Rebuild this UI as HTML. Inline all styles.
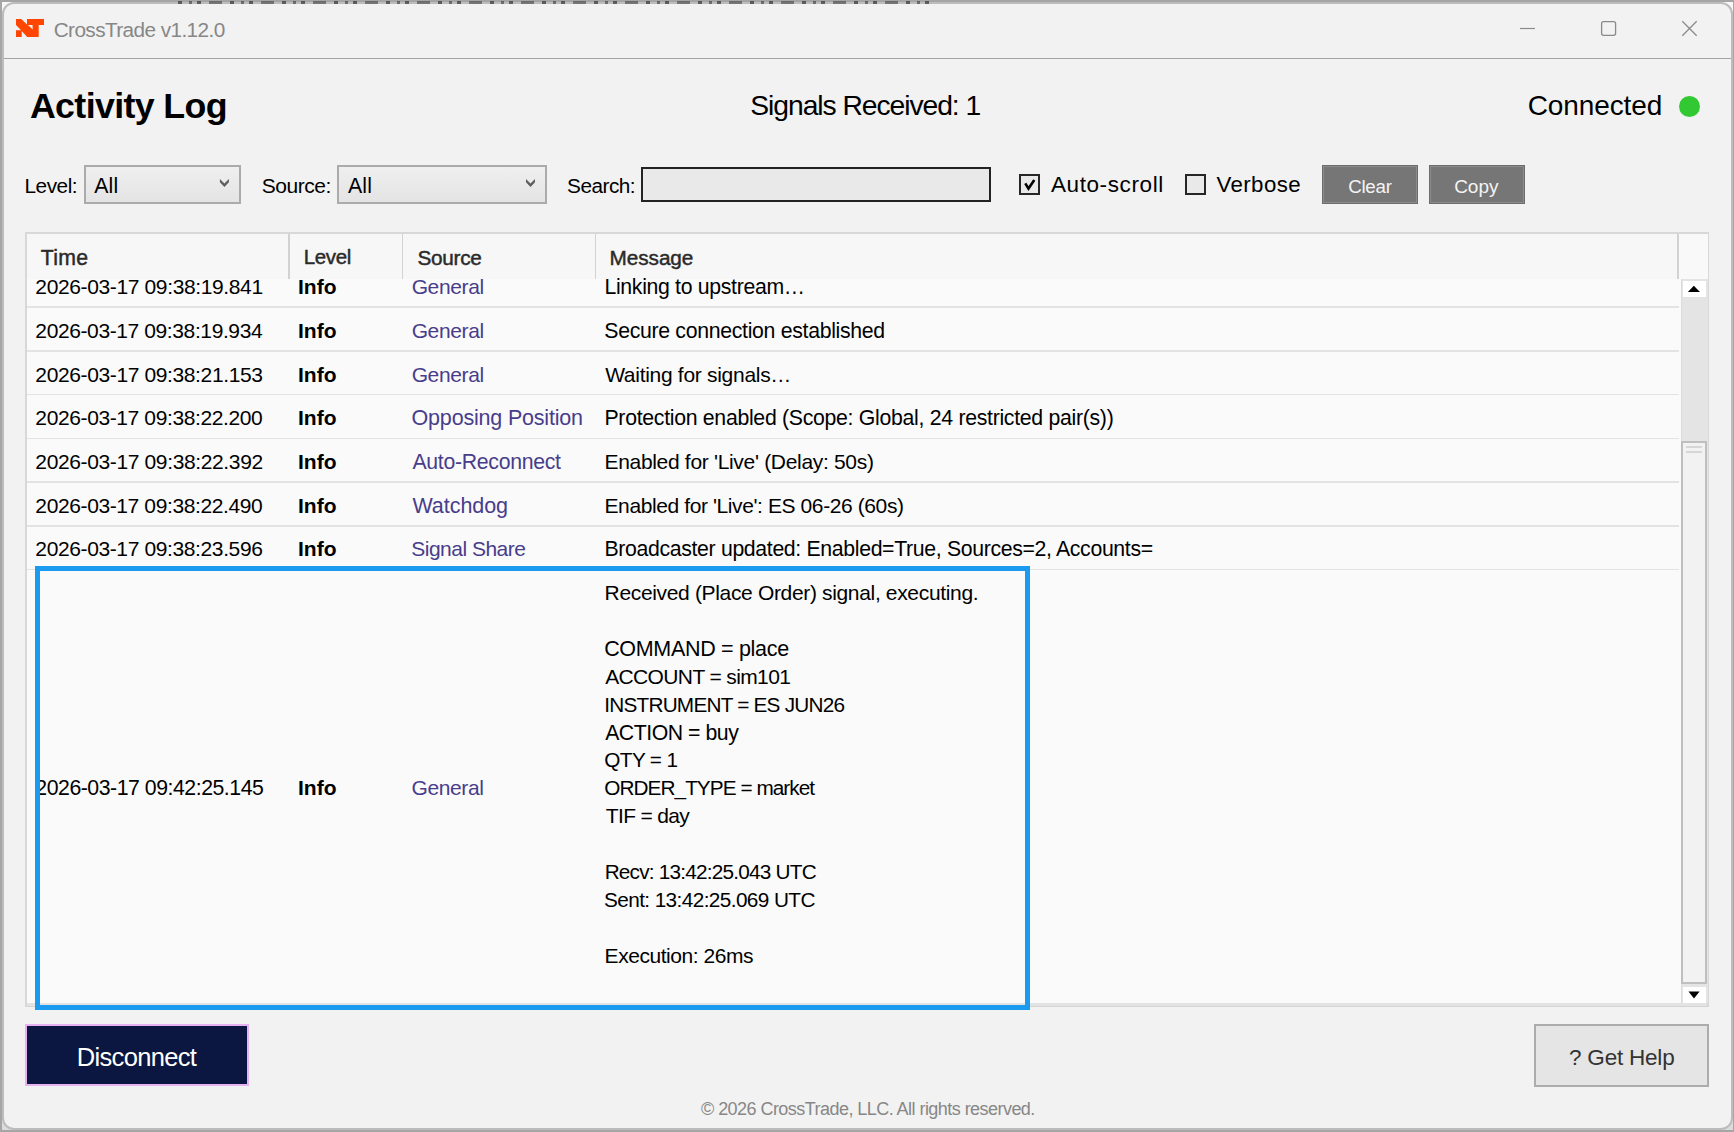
<!DOCTYPE html>
<html><head><meta charset="utf-8">
<style>
*{box-sizing:border-box}
html,body{margin:0;padding:0}
body{width:1734px;height:1132px;position:relative;overflow:hidden;background:#a6a6a6;font-family:"Liberation Sans",sans-serif}
.t{position:absolute;white-space:pre;line-height:1}
.a{position:absolute}
.combo{position:absolute;border:2px solid #ababab;background:linear-gradient(#efefef,#e4e4e4)}
.cb{position:absolute;width:21px;height:21px;border:2px solid #262626;background:#e8e9e8}
.gbtn{position:absolute;width:96px;height:39px;background:#767676;border:1px solid #6c6c6c;box-shadow:inset 0 0 0 1px #8c8c8c}
.vd{position:absolute;top:234px;width:1.5px;height:44.5px;background:#d2d2d2}
.rs{position:absolute;left:27px;width:1652px;height:1.5px;background:#e3e3e3}
</style></head><body>
<div class="a" style="left:0;top:0;width:1734px;height:2px;background:#a5a5a5"></div>

<div class="a" style="left:2px;top:2px;width:12px;height:12px;background:#f7f7f7"></div>
<div class="a" style="left:1721px;top:2px;width:12px;height:12px;background:#f7f7f7"></div>
<div class="a" style="left:2px;top:1118px;width:12px;height:12px;background:#dcdcdc"></div>
<div class="a" style="left:1721px;top:1118px;width:12px;height:12px;background:#dcdcdc"></div>
<div class="a" style="left:2px;top:2px;width:1731px;height:1128px;border:2px solid #bcbcbc;border-radius:12px;background:#f2f2f2"></div>
<div class="a" style="left:178px;top:1px;width:755px;height:3px;background:repeating-linear-gradient(90deg,rgba(30,30,30,.6) 0 4px,transparent 4px 11px,rgba(30,30,30,.5) 11px 14px,transparent 14px 19px,rgba(30,30,30,.6) 19px 23px,transparent 23px 31px,rgba(30,30,30,.45) 31px 44px,transparent 44px 52px)"></div>
<div class="a" style="left:4px;top:57.8px;width:1727px;height:1.4px;background:#a4a4a4"></div>
<svg class="a" style="left:16px;top:19px" width="28" height="18" viewBox="0 0 28 18">
<path fill="#ff4500" fill-rule="evenodd" d="M0,0H5.3L11,5.6V0H28V5.9H22.7V17.9H11.2L5.7,11.9V17.9H0V11.3H5.1L0,5.9Z M12,6H16.6V10.6Z"/>
</svg>
<svg class="a" style="left:1500px;top:10px" width="220" height="40" viewBox="1500 10 220 40">
<path d="M1520,28.5H1535" stroke="#8a8a8a" stroke-width="1.2" fill="none"/>
<rect x="1601.6" y="21.7" width="14" height="13.6" rx="2" ry="2" stroke="#8a8a8a" stroke-width="1.3" fill="none"/>
<path d="M1682.3,21.3L1696.7,35.7M1696.7,21.3L1682.3,35.7" stroke="#8a8a8a" stroke-width="1.3" fill="none"/>
</svg>
<div class="a" style="left:1679.2px;top:95.7px;width:21px;height:21px;border-radius:50%;background:#32c832"></div>
<!-- combos -->
<div class="combo" style="left:84px;top:165px;width:157px;height:39px"></div>
<div class="combo" style="left:337px;top:165px;width:210px;height:39px"></div>
<svg class="a" style="left:0;top:0" width="600" height="220" viewBox="0 0 600 220">
<path d="M219.9,179L224.4,183.6L228.9,179V182.2L224.4,187L219.9,182.2Z" fill="#5e5e5e"/>
<path d="M526,179L530.5,183.6L535,179V182.2L530.5,187L526,182.2Z" fill="#5e5e5e"/>
</svg>
<div class="a" style="left:641px;top:167px;width:350px;height:35px;border:2px solid #232323;background:#e8e9e8"></div>
<div class="cb" style="left:1019px;top:174px"></div>
<div class="cb" style="left:1185px;top:174px"></div>
<svg class="a" style="left:1019px;top:174px" width="21" height="21" viewBox="0 0 21 21">
<path d="M6.3,9.3L9.5,14.6L15.3,6.1" stroke="#000" stroke-width="2.6" fill="none" stroke-linejoin="miter"/>
</svg>
<div class="gbtn" style="left:1322px;top:165px"></div>
<div class="gbtn" style="left:1429px;top:165px"></div>
<!-- table -->
<div class="a" style="left:25px;top:232px;width:1684px;height:775px;border:2px solid #d8d8d8;border-bottom-width:1px;border-bottom-color:#d4d4d4;background:#fafafa"></div>
<div class="a" style="left:26.6px;top:233.6px;width:1681px;height:45px;background:#f7f7f7"></div>
<div class="vd" style="left:288.2px"></div>
<div class="vd" style="left:401.9px"></div>
<div class="vd" style="left:594.8px"></div>
<div class="vd" style="left:1677.4px"></div>
<div class="a" style="left:1679px;top:233.6px;width:29px;height:45px;background:#f9f9f9"></div>
<div class="rs" style="top:306.4px"></div>
<div class="rs" style="top:350.1px"></div>
<div class="rs" style="top:393.9px"></div>
<div class="rs" style="top:437.6px"></div>
<div class="rs" style="top:481.4px"></div>
<div class="rs" style="top:525.1px"></div>
<div class="rs" style="top:568.6px"></div>
<div class="a" style="left:27px;top:1003px;width:1680px;height:3px;background:#e3e3e3"></div>
<!-- scrollbar -->
<div class="a" style="left:1681px;top:279px;width:26.8px;height:724px;background:#e4e4e4;border-left:1px solid #dcdcdc"></div>
<div class="a" style="left:1683px;top:281px;width:23px;height:16px;background:#fff"></div>
<div class="a" style="left:1683px;top:986.5px;width:23px;height:16.5px;background:#fff"></div>
<svg class="a" style="left:1680px;top:278px" width="30" height="730" viewBox="1680 278 30 730">
<path d="M1687.9,292L1693.8,285.8L1700,292Z" fill="#000"/>
<path d="M1688.5,991.5L1699.6,991.5L1694,998.4Z" fill="#000"/>
</svg>
<div class="a" style="left:1681px;top:441px;width:26px;height:543px;border:2px solid #bfbfbf;background:#f2f2f2"></div>
<div class="a" style="left:1686px;top:446px;width:16px;height:1.8px;background:#d6d6d6"></div>
<div class="a" style="left:1686px;top:451px;width:16px;height:1.8px;background:#d6d6d6"></div>
<!-- selection -->
<!-- bottom -->
<div class="a" style="left:25px;top:1024px;width:224px;height:62px;border:2px solid #e6b3f0;background:#0b1740"></div>
<div class="a" style="left:1534px;top:1024px;width:175px;height:63px;border:2px solid #acacac;background:#e5e5e5"></div>
<div id="title" class="t" style="left:53.69px;top:20.04px;font-size:20.75px;letter-spacing:-0.583px;font-weight:normal;color:#878787">CrossTrade v1.12.0</div>
<div id="h1" class="t" style="left:29.95px;top:88.54px;font-size:35.75px;letter-spacing:-0.633px;font-weight:bold;color:#000">Activity Log</div>
<div id="sig" class="t" style="left:750.30px;top:91.09px;font-size:28.25px;letter-spacing:-1.045px;font-weight:normal;color:#000">Signals Received: 1</div>
<div id="conn" class="t" style="left:1527.66px;top:92.10px;font-size:28.0px;letter-spacing:-0.095px;font-weight:normal;color:#000">Connected</div>
<div id="lvl" class="t" style="left:24.53px;top:176.24px;font-size:20.75px;letter-spacing:-0.454px;font-weight:normal;color:#000">Level:</div>
<div id="all1" class="t" style="left:94.14px;top:175.81px;font-size:21.25px;letter-spacing:0.277px;font-weight:normal;color:#000">All</div>
<div id="src" class="t" style="left:261.72px;top:175.12px;font-size:21.0px;letter-spacing:-0.460px;font-weight:normal;color:#000">Source:</div>
<div id="all2" class="t" style="left:348.05px;top:175.91px;font-size:21.25px;letter-spacing:0.122px;font-weight:normal;color:#000">All</div>
<div id="srch" class="t" style="left:567.10px;top:176.44px;font-size:20.75px;letter-spacing:-0.506px;font-weight:normal;color:#000">Search:</div>
<div id="auto" class="t" style="left:1050.88px;top:173.85px;font-size:22.5px;letter-spacing:0.616px;font-weight:normal;color:#000">Auto-scroll</div>
<div id="verb" class="t" style="left:1216.39px;top:174.07px;font-size:22.25px;letter-spacing:0.444px;font-weight:normal;color:#000">Verbose</div>
<div id="clear" class="t" style="left:1348.13px;top:178.23px;font-size:18.75px;letter-spacing:-0.249px;font-weight:normal;color:#f4f4f4">Clear</div>
<div id="copy" class="t" style="left:1454.16px;top:177.02px;font-size:19.0px;letter-spacing:-0.016px;font-weight:normal;color:#f4f4f4">Copy</div>
<div id="th1" class="t" style="left:40.77px;top:247.81px;font-size:21.25px;letter-spacing:0.323px;font-weight:normal;color:#2a2a2a;-webkit-text-stroke:0.45px #2a2a2a">Time</div>
<div id="th2" class="t" style="left:303.81px;top:247.45px;font-size:20.5px;letter-spacing:-0.380px;font-weight:normal;color:#2a2a2a;-webkit-text-stroke:0.45px #2a2a2a">Level</div>
<div id="th3" class="t" style="left:417.42px;top:248.24px;font-size:20.75px;letter-spacing:-0.256px;font-weight:normal;color:#2a2a2a;-webkit-text-stroke:0.45px #2a2a2a">Source</div>
<div id="th4" class="t" style="left:609.48px;top:248.24px;font-size:20.75px;letter-spacing:-0.042px;font-weight:normal;color:#2a2a2a;-webkit-text-stroke:0.45px #2a2a2a">Message</div>
<div id="r0t" class="t" style="left:35.35px;top:276.22px;font-size:21.0px;letter-spacing:-0.369px;font-weight:normal;color:#000">2026-03-17 09:38:19.841</div>
<div id="r0i" class="t" style="left:297.90px;top:276.22px;font-size:21.0px;letter-spacing:0.078px;font-weight:bold;color:#000">Info</div>
<div id="r0s" class="t" style="left:411.63px;top:276.22px;font-size:21.0px;letter-spacing:-0.362px;font-weight:normal;color:#483d8b">General</div>
<div id="r0m" class="t" style="left:604.47px;top:277.01px;font-size:21.25px;letter-spacing:-0.324px;font-weight:normal;color:#000">Linking to upstream…</div>
<div id="r1t" class="t" style="left:35.35px;top:320.22px;font-size:21.0px;letter-spacing:-0.391px;font-weight:normal;color:#000">2026-03-17 09:38:19.934</div>
<div id="r1i" class="t" style="left:297.90px;top:320.22px;font-size:21.0px;letter-spacing:0.078px;font-weight:bold;color:#000">Info</div>
<div id="r1s" class="t" style="left:411.63px;top:320.22px;font-size:21.0px;letter-spacing:-0.362px;font-weight:normal;color:#483d8b">General</div>
<div id="r1m" class="t" style="left:604.28px;top:321.01px;font-size:21.25px;letter-spacing:-0.304px;font-weight:normal;color:#000">Secure connection established</div>
<div id="r2t" class="t" style="left:35.35px;top:364.22px;font-size:21.0px;letter-spacing:-0.377px;font-weight:normal;color:#000">2026-03-17 09:38:21.153</div>
<div id="r2i" class="t" style="left:297.90px;top:364.22px;font-size:21.0px;letter-spacing:0.078px;font-weight:bold;color:#000">Info</div>
<div id="r2s" class="t" style="left:411.63px;top:364.22px;font-size:21.0px;letter-spacing:-0.362px;font-weight:normal;color:#483d8b">General</div>
<div id="r2m" class="t" style="left:605.14px;top:364.22px;font-size:21.0px;letter-spacing:-0.293px;font-weight:normal;color:#000">Waiting for signals…</div>
<div id="r3t" class="t" style="left:35.35px;top:407.22px;font-size:21.0px;letter-spacing:-0.385px;font-weight:normal;color:#000">2026-03-17 09:38:22.200</div>
<div id="r3i" class="t" style="left:297.90px;top:407.22px;font-size:21.0px;letter-spacing:0.078px;font-weight:bold;color:#000">Info</div>
<div id="r3s" class="t" style="left:411.55px;top:407.80px;font-size:21.5px;letter-spacing:-0.186px;font-weight:normal;color:#483d8b">Opposing Position</div>
<div id="r3m" class="t" style="left:604.47px;top:408.01px;font-size:21.25px;letter-spacing:-0.292px;font-weight:normal;color:#000">Protection enabled (Scope: Global, 24 restricted pair(s))</div>
<div id="r4t" class="t" style="left:35.35px;top:451.22px;font-size:21.0px;letter-spacing:-0.367px;font-weight:normal;color:#000">2026-03-17 09:38:22.392</div>
<div id="r4i" class="t" style="left:297.90px;top:451.22px;font-size:21.0px;letter-spacing:0.078px;font-weight:bold;color:#000">Info</div>
<div id="r4s" class="t" style="left:412.43px;top:452.01px;font-size:21.25px;letter-spacing:-0.292px;font-weight:normal;color:#483d8b">Auto-Reconnect</div>
<div id="r4m" class="t" style="left:604.47px;top:451.22px;font-size:21.0px;letter-spacing:-0.313px;font-weight:normal;color:#000">Enabled for 'Live' (Delay: 50s)</div>
<div id="r5t" class="t" style="left:35.35px;top:495.22px;font-size:21.0px;letter-spacing:-0.385px;font-weight:normal;color:#000">2026-03-17 09:38:22.490</div>
<div id="r5i" class="t" style="left:297.90px;top:495.22px;font-size:21.0px;letter-spacing:0.078px;font-weight:bold;color:#000">Info</div>
<div id="r5s" class="t" style="left:412.43px;top:495.80px;font-size:21.5px;letter-spacing:-0.054px;font-weight:normal;color:#483d8b">Watchdog</div>
<div id="r5m" class="t" style="left:604.52px;top:495.22px;font-size:21.0px;letter-spacing:-0.401px;font-weight:normal;color:#000">Enabled for 'Live': ES 06-26 (60s)</div>
<div id="r6t" class="t" style="left:35.35px;top:538.22px;font-size:21.0px;letter-spacing:-0.379px;font-weight:normal;color:#000">2026-03-17 09:38:23.596</div>
<div id="r6i" class="t" style="left:297.90px;top:538.22px;font-size:21.0px;letter-spacing:0.078px;font-weight:bold;color:#000">Info</div>
<div id="r6s" class="t" style="left:411.29px;top:538.22px;font-size:21.0px;letter-spacing:-0.508px;font-weight:normal;color:#483d8b">Signal Share</div>
<div id="r6m" class="t" style="left:604.47px;top:539.01px;font-size:21.25px;letter-spacing:-0.337px;font-weight:normal;color:#000">Broadcaster updated: Enabled=True, Sources=2, Accounts=</div>
<div id="r7t" class="t" style="left:35.35px;top:778.01px;font-size:21.25px;letter-spacing:-0.464px;font-weight:normal;color:#000">2026-03-17 09:42:25.145</div>
<div id="r7i" class="t" style="left:297.89px;top:777.22px;font-size:21.0px;letter-spacing:0.081px;font-weight:bold;color:#000">Info</div>
<div id="r7s" class="t" style="left:411.44px;top:777.22px;font-size:21.0px;letter-spacing:-0.363px;font-weight:normal;color:#483d8b">General</div>
<div id="ml0" class="t" style="left:604.57px;top:582.22px;font-size:21.0px;letter-spacing:-0.338px;font-weight:normal;color:#000">Received (Place Order) signal, executing.</div>
<div id="ml2" class="t" style="left:604.16px;top:638.60px;font-size:21.5px;letter-spacing:-0.314px;font-weight:normal;color:#000">COMMAND = place</div>
<div id="ml3" class="t" style="left:605.14px;top:665.92px;font-size:21.0px;letter-spacing:-0.620px;font-weight:normal;color:#000">ACCOUNT = sim101</div>
<div id="ml4" class="t" style="left:604.27px;top:695.04px;font-size:20.75px;letter-spacing:-0.772px;font-weight:normal;color:#000">INSTRUMENT = ES JUN26</div>
<div id="ml5" class="t" style="left:605.14px;top:722.51px;font-size:21.25px;letter-spacing:-0.465px;font-weight:normal;color:#000">ACTION = buy</div>
<div id="ml6" class="t" style="left:604.32px;top:749.84px;font-size:20.75px;letter-spacing:-0.623px;font-weight:normal;color:#000">QTY = 1</div>
<div id="ml7" class="t" style="left:604.32px;top:777.74px;font-size:20.75px;letter-spacing:-0.942px;font-weight:normal;color:#000">ORDER_TYPE = market</div>
<div id="ml8" class="t" style="left:605.80px;top:805.42px;font-size:21.0px;letter-spacing:-0.662px;font-weight:normal;color:#000">TIF = day</div>
<div id="ml10" class="t" style="left:604.63px;top:862.44px;font-size:20.75px;letter-spacing:-0.776px;font-weight:normal;color:#000">Recv: 13:42:25.043 UTC</div>
<div id="ml11" class="t" style="left:603.97px;top:890.34px;font-size:20.75px;letter-spacing:-0.588px;font-weight:normal;color:#000">Sent: 13:42:25.069 UTC</div>
<div id="ml13" class="t" style="left:604.62px;top:944.92px;font-size:21.0px;letter-spacing:-0.453px;font-weight:normal;color:#000">Execution: 26ms</div>
<div id="disc" class="t" style="left:76.84px;top:1045.41px;font-size:25.5px;letter-spacing:-0.678px;font-weight:normal;color:#ffffff">Disconnect</div>
<div id="help" class="t" style="left:1569.02px;top:1046.85px;font-size:22.5px;letter-spacing:-0.214px;font-weight:normal;color:#333333">? Get Help</div>
<div id="foot" class="t" style="left:700.97px;top:1099.86px;font-size:18.0px;letter-spacing:-0.544px;font-weight:normal;color:#878787">© 2026 CrossTrade, LLC. All rights reserved.</div>
<div class="a" style="left:35px;top:566px;width:995px;height:444px;border:5px solid #1a9bf0"></div>

</body></html>
